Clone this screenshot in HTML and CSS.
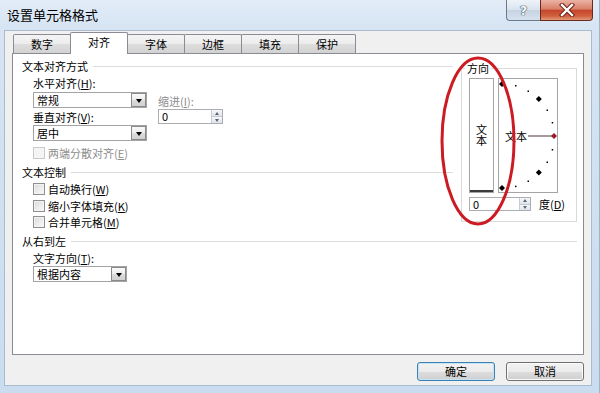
FILE: index.html
```html
<!DOCTYPE html>
<html lang="zh-CN">
<head>
<meta charset="utf-8">
<title>设置单元格格式</title>
<link rel="stylesheet" href="styles.css">
</head>
<body>
<div class="window">
  <div class="titlebar">
    <div class="title">设置单元格格式</div>
    <div class="caption">
      <div class="cap help">?</div>
      <div class="cap close">
        <svg width="16" height="14" viewBox="0 0 16 14">
          <path d="M3 2 L13 12 M13 2 L3 12" stroke="#6e1f14" stroke-width="4.4" stroke-linecap="square"/>
          <path d="M3 2 L13 12 M13 2 L3 12" stroke="#ffffff" stroke-width="2.4" stroke-linecap="square"/>
        </svg>
      </div>
    </div>
  </div>

  <div class="client">
    <div class="tabs">
      <div class="tab">数字</div>
      <div class="tab active">对齐</div>
      <div class="tab">字体</div>
      <div class="tab">边框</div>
      <div class="tab">填充</div>
      <div class="tab">保护</div>
    </div>

    <div class="panel">
      <div class="panel-top">
        <div class="left">
          <div class="group-head">文本对齐方式</div>
          <div class="align-grid">
            <div class="col-main">
              <div class="label">水平对齐(<u>H</u>):</div>
              <div class="select sel-wide"><span class="val">常规</span><span class="dd"><i></i></span></div>
              <div class="label gap2">垂直对齐(<u>V</u>):</div>
              <div class="select sel-wide gap1"><span class="val">居中</span><span class="dd"><i></i></span></div>
            </div>
            <div class="col-indent">
              <div class="label disabled">缩进(<u>I</u>):</div>
              <div class="spin spin-indent"><span class="val">0</span><span class="arrows"><span class="up"><i></i></span><span class="down"><i></i></span></span></div>
            </div>
          </div>
          <div class="check disabled first"><span class="cb"></span>两端分散对齐(<u>E</u>)</div>

          <div class="group-head mt5">文本控制</div>
          <div class="check mt3"><span class="cb"></span>自动换行(<u>W</u>)</div>
          <div class="check mt3"><span class="cb"></span>缩小字体填充(<u>K</u>)</div>
          <div class="check mt2"><span class="cb"></span>合并单元格(<u>M</u>)</div>
        </div>

        <div class="orient">
          <div class="orient-title">方向</div>
          <div class="orient-boxes">
            <div class="vbox"><span class="vtext">文本</span></div>
            <div class="sbox">
              <svg width="58" height="113" viewBox="0 0 58 113">
                <text x="6" y="62" font-size="11" font-family="Noto Sans CJK SC, sans-serif" fill="#000">文本</text>
                <line x1="29" y1="57" x2="53" y2="57" stroke="#4a3a3a" stroke-width="1"/>
                <path d="M3 2 L6 5 L3 8 L0 5 Z" fill="#000"/>
                <path d="M39.8 17 L42.8 20 L39.8 23 L36.8 20 Z" fill="#000"/>
                <path d="M39.8 90.6 L42.8 93.6 L39.8 96.6 L36.8 93.6 Z" fill="#000"/>
                <path d="M3 106 L6 109 L3 112 L0 109 Z" fill="#000"/>
                <path d="M55 54 L58 57 L55 60 L52 57 Z" fill="#9b1b2b"/>
                <rect x="16" y="6" width="1.5" height="1.5" fill="#000"/>
                <rect x="28.5" y="11.5" width="1.5" height="1.5" fill="#000"/>
                <rect x="47.5" y="30.5" width="1.5" height="1.5" fill="#000"/>
                <rect x="52.7" y="43" width="1.5" height="1.5" fill="#000"/>
                <rect x="52.7" y="70" width="1.5" height="1.5" fill="#000"/>
                <rect x="47.5" y="82.5" width="1.5" height="1.5" fill="#000"/>
                <rect x="28.5" y="101.5" width="1.5" height="1.5" fill="#000"/>
                <rect x="16" y="106.7" width="1.5" height="1.5" fill="#000"/>
              </svg>
            </div>
          </div>
          <div class="deg-row">
            <div class="spin spin-deg"><span class="val">0</span><span class="arrows"><span class="up"><i></i></span><span class="down"><i></i></span></span></div>
            <div class="deg-label">度(<u>D</u>)</div>
          </div>
        </div>
      </div>

      <div class="group-head mt5 rtl-head">从右到左</div>
      <div class="label mt3">文字方向(<u>T</u>):</div>
      <div class="select sel-dir gap1"><span class="val">根据内容</span><span class="dd"><i></i></span></div>
    </div>

    <div class="buttons">
      <button class="btn default">确定</button>
      <button class="btn">取消</button>
    </div>
  </div>

  <svg class="annot" width="80" height="174" viewBox="0 0 80 174">
    <ellipse cx="39" cy="86" rx="36" ry="83" fill="none" stroke="#cc1b23" stroke-width="3"/>
  </svg>
</div>
</body>
</html>
```

FILE: styles.css
```css
* { box-sizing: border-box; }
html, body { margin: 0; padding: 0; }
body {
  width: 600px;
  height: 393px;
  overflow: hidden;
  font-family: "Noto Sans CJK SC", "Noto Sans", sans-serif;
  font-size: 11px;
  color: #000;
  background: #cfdeee;
}
u { text-decoration: underline; text-underline-offset: 1px; }

.window {
  position: relative;
  width: 600px;
  height: 393px;
  background: linear-gradient(180deg, #e2ecf7 0, #d6e4f3 28px, #cadcef 100%);
  border-right: 1px solid #9fb4cb;
}

/* title bar */
.titlebar {
  height: 30px;
  display: flex;
  align-items: flex-start;
}
.title {
  font-size: 13px;
  line-height: 16px;
  padding: 7px 0 0 7px;
  color: #000;
}
.caption {
  margin-left: auto;
  margin-right: 6px;
  display: flex;
}
.cap {
  height: 21px;
  display: flex;
  align-items: center;
  justify-content: center;
  border: 1px solid #6a7a8e;
  border-top: none;
}
.help {
  width: 34px;
  border-right: none;
  border-radius: 0 0 0 4px;
  background: linear-gradient(180deg, #eef3f9 0, #d9e3ee 50%, #c6d3e1 51%, #d7e2ee 100%);
  color: #f6f8fb;
  font-family: "DejaVu Sans", sans-serif;
  font-weight: bold;
  font-size: 13px;
  text-shadow: 0 0 1px #3b4b5e, 0 0 1px #3b4b5e, 0 0 1px #3b4b5e;
}
.close {
  width: 53px;
  border-color: #6b2a20;
  border-radius: 0 0 4px 0;
  background: linear-gradient(180deg, #eab3a5 0, #d98069 45%, #c6472d 52%, #d0603f 80%, #e39a78 100%);
}

/* client */
.client {
  margin: 0 7px 0 4px;
  height: 356px;
  background: #f0f0f0;
  border: 1px solid #a9bbcf;
  padding: 1px 7px 0 7px;
}

.tabs {
  display: flex;
  align-items: flex-end;
  height: 22px;
  padding-left: 1px;
  position: relative;
  z-index: 1;
}
.tab {
  width: 58px;
  height: 19px;
  margin-left: -1px;
  margin-bottom: 1px;
  border: 1px solid #898c95;
  border-bottom: none;
  border-radius: 2px 2px 0 0;
  background: linear-gradient(180deg, #f4f4f4 0, #ececec 50%, #dedede 51%, #d2d2d2 100%);
  text-align: center;
  line-height: 18px;
}
.tab:first-child { margin-left: 0; }
.tab.active {
  height: 22px;
  margin-bottom: 0;
  background: #fff;
  position: relative;
  z-index: 2;
}

.panel {
  height: 302px;
  margin-top: -1px;
  background: #fff;
  border: 1px solid #898c95;
  padding: 5px 6px 0 9px;
  display: flex;
  flex-direction: column;
}
.panel-top {
  display: flex;
  align-items: flex-start;
}
.left {
  flex: 1;
}

.group-head {
  display: flex;
  align-items: center;
  height: 14px;
  line-height: 14px;
}
.group-head::after {
  content: "";
  flex: 1;
  height: 0;
  border-top: 1px solid #dcdcdc;
  margin: 1px 8px 0 5px;
}
.rtl-head::after { margin-right: 0; }

.mt2 { margin-top: 2px; }
.mt3 { margin-top: 3px; }
.mt5 { margin-top: 5px; }
.gap1 { margin-top: 1px; }
.gap2 { margin-top: 2px; }

.label {
  margin-left: 11px;
  height: 14px;
  line-height: 14px;
  white-space: nowrap;
}
.col-main .label { margin-left: 0; }
.col-indent .label { margin-left: 0; }
.disabled { color: #8d8d8d; }

.align-grid {
  display: flex;
  margin: 3px 0 0 11px;
}
.col-main { width: 114px; }
.col-main .select { margin-top: 2px; }
.col-main .select.gap1 { margin-top: 1px; }
.col-indent {
  margin-left: 11px;
  padding-top: 18px;
}

/* combobox */
.select {
  display: flex;
  height: 16px;
  border: 1px solid #a3a3a3;
  background: #fff;
}
.sel-wide { width: 114px; }
.sel-dir { width: 94px; margin-left: 11px; }
.select .val {
  flex: 1;
  padding-left: 3px;
  line-height: 14px;
}
.select .dd {
  width: 15px;
  height: 14px;
  border: 1px solid #8a8a8a;
  background: linear-gradient(180deg, #fafafa 0, #ececec 50%, #dcdcdc 51%, #d0d0d0 100%);
  display: flex;
  align-items: center;
  justify-content: center;
}
.select .dd i {
  width: 0;
  height: 0;
  border-left: 3.5px solid transparent;
  border-right: 3.5px solid transparent;
  border-top: 4px solid #000;
  margin-top: 1px;
}

/* spin */
.spin {
  display: flex;
  border: 1px solid #abadb3;
  background: #fff;
}
.spin-indent { width: 65px; height: 15px; margin-top: 1px; }
.spin-deg { width: 62px; height: 14px; }
.spin .val {
  flex: 1;
  padding-left: 3px;
  line-height: 13px;
}
.spin .arrows {
  width: 11px;
  display: flex;
  flex-direction: column;
  border-left: 1px solid #c8cdd5;
}
.spin .arrows > span {
  flex: 1;
  display: flex;
  align-items: center;
  justify-content: center;
  background: linear-gradient(180deg, #f6f8fa, #dfe4ea);
}
.spin .arrows .down { border-top: 1px solid #c3c9d1; }
.spin .up i {
  border-left: 2.5px solid transparent;
  border-right: 2.5px solid transparent;
  border-bottom: 3px solid #5a6676;
}
.spin .down i {
  border-left: 2.5px solid transparent;
  border-right: 2.5px solid transparent;
  border-top: 3px solid #5a6676;
}

/* checkbox */
.check {
  display: flex;
  align-items: center;
  height: 14px;
  line-height: 14px;
  margin-left: 11px;
  white-space: nowrap;
}
.check.first { margin-top: 5px; }
.cb {
  width: 12px;
  height: 12px;
  margin-right: 3px;
  border: 1px solid #8e8f8f;
  background: linear-gradient(135deg, #d9d9d9 0, #eeeeee 60%, #fafafa 100%);
  box-shadow: inset 0 0 0 1px #f2f2f2;
}
.check.disabled .cb {
  border-color: #c9c9c9;
  background: #f4f4f4;
  box-shadow: none;
}

/* orientation */
.orient {
  width: 116px;
  margin-top: 9px;
  border: 1px solid #d9d9d9;
  padding: 0 0 10px 7px;
}
.orient-title {
  width: fit-content;
  margin: -8px 0 0 -4px;
  padding: 0 2px;
  background: #fff;
  line-height: 14px;
  height: 14px;
}
.orient-boxes {
  display: flex;
  gap: 4px;
  margin-top: 3px;
}
.vbox {
  width: 25px;
  height: 115px;
  border: 1px solid #a5a5a5;
  box-shadow: inset 0 -2px 0 #3c3c3c;
  display: flex;
  align-items: center;
  justify-content: center;
}
.vtext {
  writing-mode: vertical-rl;
  text-orientation: upright;
  line-height: 12px;
  margin-top: -1px;
}
.sbox {
  width: 60px;
  height: 115px;
  border: 1px solid #a5a5a5;
}
.sbox svg { display: block; }
.deg-row {
  display: flex;
  align-items: center;
  margin-top: 4px;
}
.deg-label {
  margin-left: 8px;
  line-height: 14px;
}

/* buttons */
.buttons {
  display: flex;
  justify-content: flex-end;
  gap: 11px;
  margin-top: 7px;
}
.btn {
  width: 78px;
  height: 19px;
  padding: 0;
  border: 1px solid #707070;
  border-radius: 3px;
  background: linear-gradient(180deg, #f2f2f2 0, #ebebeb 50%, #dddddd 51%, #cfcfcf 100%);
  box-shadow: inset 0 0 0 1px #fbfbfb;
  font-family: inherit;
  font-size: 11px;
  line-height: 17px;
  color: #000;
}
.btn.default {
  border-color: #3c7fb1;
  box-shadow: inset 0 0 0 1px #c3e4f6;
}

/* annotation */
.annot {
  position: absolute;
  left: 439px;
  top: 55px;
}
```
